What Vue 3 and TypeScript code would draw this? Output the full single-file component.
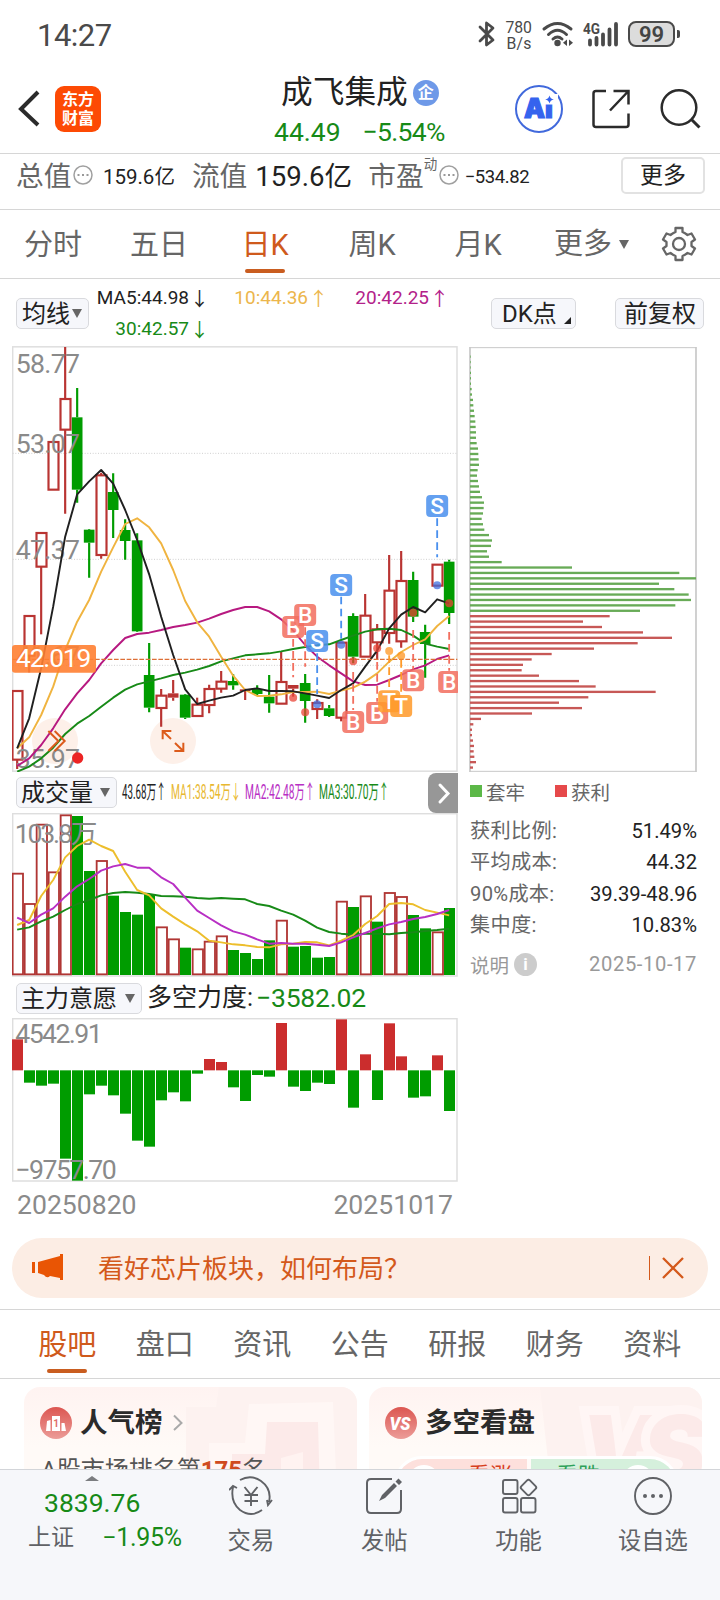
<script setup lang="ts">
type Dir = 'up' | 'down'
type Candle = { high: number; top: number; bottom: number; low: number; dir: Dir; solid?: boolean }
type Marker = { kind: 'B' | 'S' | 'T'; i: number; y: number; from: number; to: number; dot: number }

const STEP = 36
const cx = (i: number): number => 51.5 + STEP * i
const line = (ys: number[]): string => ys.map((y, i) => `${cx(i)},${y}`).join(' ')

const c = (dir: Dir, high: number, top: number, bottom: number, low: number, solid = false): Candle => ({ dir, high, top, bottom, low, solid })

const candles: Candle[] = [
  c('up', 1052, 1052, 1260, 1287), c('up', 827, 827, 948, 997), c('up', 578, 578, 681, 883),
  c('up', 305, 305, 450, 450), c('up', 21, 176, 270, 521), c('down', 144, 232, 449, 488),
  c('down', 567, 569, 608, 713), c('up', 398, 405, 646, 656), c('down', 400, 456, 510, 594),
  c('down', 538, 570, 603, 659), c('down', 580, 601, 874, 876), c('down', 909, 1005, 1103, 1117),
  c('up', 1047, 1066, 1105, 1160), c('up', 1020, 1060, 1073, 1082, true), c('down', 1062, 1064, 1133, 1137),
  c('up', 1073, 1093, 1129, 1129), c('up', 1034, 1046, 1096, 1120), c('up', 993, 1024, 1047, 1058),
  c('down', 1003, 1023, 1036, 1049), c('up', 1046, 1048, 1053, 1080, true), c('down', 1036, 1047, 1062, 1065),
  c('down', 1005, 1070, 1090, 1118), c('up', 935, 1025, 1092, 1092), c('up', 1035, 1035, 1046, 1070, true),
  c('down', 1002, 1029, 1083, 1148), c('up', 1078, 1088, 1108, 1137), c('down', 1095, 1105, 1128, 1131),
  c('up', 907, 907, 1134, 1144), c('down', 820, 828, 950, 970), c('up', 762, 826, 951, 951),
  c('up', 852, 867, 908, 960), c('up', 645, 751, 880, 911), c('up', 633, 722, 905, 923),
  c('down', 695, 720, 830, 846), c('down', 854, 876, 912, 1013), c('up', 673, 673, 738, 738),
  c('down', 659, 665, 819, 852),
]

const ma5 = [1225, 1135, 985, 800, 590, 463, 424, 390, 431, 510, 600, 703, 830, 945, 1048, 1092, 1082, 1073, 1067, 1050, 1045, 1053, 1053, 1054, 1060, 1067, 1074, 1050, 1030, 980, 932, 865, 824, 801, 817, 778, 790]
const ma10 = [1225, 1192, 1125, 1040, 930, 845, 780, 695, 622, 552, 535, 562, 610, 690, 783, 847, 890, 950, 1007, 1050, 1068, 1067, 1063, 1056, 1056, 1055, 1062, 1052, 1043, 1025, 1000, 965, 936, 915, 898, 858, 828]
const ma20 = [1278, 1255, 1215, 1165, 1108, 1060, 1020, 970, 930, 894, 882, 878, 870, 861, 855, 848, 836, 822, 810, 801, 801, 814, 838, 872, 915, 950, 976, 1000, 1024, 1035, 1034, 1020, 1005, 988, 976, 957, 946]
const ma30 = [1295, 1280, 1255, 1223, 1182, 1151, 1128, 1100, 1073, 1049, 1033, 1024, 1015, 1005, 998, 989, 978, 964, 955, 946, 943, 940, 934, 927, 921, 916, 913, 900, 887, 875, 868, 866, 870, 887, 911, 920, 927]

const markers: Marker[] = [
  { kind: 'B', i: 23, y: 861, from: 897, to: 1012, dot: 1073 },
  { kind: 'B', i: 24, y: 825, from: 862, to: 980, dot: 1117 },
  { kind: 'S', i: 25, y: 903, from: 940, to: 1062, dot: 1093 },
  { kind: 'S', i: 27, y: 735, from: 770, to: 896, dot: 914 },
  { kind: 'B', i: 28, y: 1146, from: 996, to: 1110, dot: 964 },
  { kind: 'B', i: 30, y: 1119, from: 966, to: 1085, dot: 925 },
  { kind: 'T', i: 31, y: 1084, from: 946, to: 1050, dot: 933 },
  { kind: 'T', i: 32, y: 1098, from: 960, to: 1064, dot: 947 },
  { kind: 'B', i: 33, y: 1021, from: 870, to: 987, dot: 818 },
  { kind: 'S', i: 35, y: 498, from: 535, to: 652, dot: 736 },
  { kind: 'B', i: 36, y: 1026, from: 876, to: 992, dot: 790 },
]
const markFill = { B: '#f26f5f', S: '#4a90ee', T: '#ff9a2a' }
const markDot = { B: '#ea4335', S: '#3f6fe0', T: '#ff9520' }

const profile = [2, 2, 2, 3, 3, 3, 5, 6, 9, 10, 12, 14, 16, 17, 18, 18, 20, 24, 25, 26, 27, 23, 21, 24, 27, 30, 36, 42, 41, 39, 35, 39, 43, 57, 66, 63, 51, 57, 95, 306, 628, 678, 567, 613, 656, 663, 616, 510, 419, 339, 396, 519, 606, 503, 372, 245, 185, 159, 155, 207, 327, 377, 557, 355, 267, 336, 186, 33, 10, 6, 6, 9, 12, 11, 13, 18, 9]
const FIRST_PROFIT = 48

const volume = [309, 400, 162, 305, 134, -138, -303, 271, -377, -426, -434, -373, 470, 506, -533, 536, 513, 497, -540, -549, -567, -511, 450, -530, -528, -563, -561, 393, -411, 377, -455, 367, 379, -435, -475, 485, -414]
const vol1 = [465, 450, 378, 330, 262, 228, 209, 228, 243, 305, 360, 376, 415, 440, 463, 484, 512, 517, 523, 526, 531, 532, 523, 521, 516, 517, 526, 512, 495, 462, 438, 402, 399, 403, 420, 428, 436]
const vol2 = [443, 459, 434, 415, 380, 349, 327, 302, 289, 282, 293, 293, 322, 342, 383, 422, 444, 466, 484, 494, 508, 521, 519, 521, 521, 524, 528, 517, 502, 489, 475, 463, 456, 447, 441, 432, 420]
const vol3 = [479, 472, 454, 440, 420, 402, 390, 376, 369, 366, 368, 372, 378, 379, 380, 384, 386, 384, 386, 388, 402, 408, 422, 434, 452, 473, 486, 491, 494, 491, 491, 493, 489, 487, 483, 480, 476]

const BASE = 901
const force = [808, 938, 947, 941, 1166, 1232, 973, 947, 976, 1031, 1112, 1130, 991, 967, 994, 911, 867, 876, 952, 993, 915, 920, 759, 950, 963, 938, 942, 748, 1013, 853, 990, 760, 859, 983, 979, 856, 1023]

const stats = [
  { label: '获利比例:', value: '51.49%' },
  { label: '平均成本:', value: '44.32' },
  { label: '90%成本:', value: '39.39-48.96' },
  { label: '集中度:', value: '10.83%' },
]
const infoTabs = ['股吧', '盘口', '资讯', '公告', '研报', '财务', '资料']
</script>

<template>
  <div class="page">
    <header class="status">
      <span class="clock">14:27</span>
      <svg class="st-icons" width="200" height="34" viewBox="474 18 200 34">
        <path d="M480 27 L493 40 L486.5 45 V23 L493 28 L480 41" fill="none" stroke="#4a4a4a" stroke-width="2.8" stroke-linejoin="round" stroke-linecap="round" />
        <text x="505.500" y="33" font-size="15.800" fill="#4a4a4a" textLength="26.500">780</text>
        <text x="506.500" y="48.500" font-size="15.800" fill="#4a4a4a" textLength="25">B/s</text>
        <g fill="none" stroke="#4a4a4a" stroke-width="3" stroke-linecap="round">
          <path d="M544 29 Q557.500 18 571 29" /><path d="M548.500 34.500 Q557.500 26 566.500 34.500" /><path d="M553 39 Q557.500 35 562 39" />
        </g>
        <circle cx="557.500" cy="43" r="3.200" fill="#4a4a4a" />
        <path d="M567 39.500 V46 L563 42.700Z M569 39.500 V46 L573 42.700Z" fill="#4a4a4a" />
        <text x="583" y="34" font-size="15.500" font-weight="700" fill="#4a4a4a" textLength="17" lengthAdjust="spacingAndGlyphs">4G</text>
        <path d="M590 40.500 V44.500 M596.500 38 V44.500 M603 34.500 V44.500 M609.500 29.500 V44.500 M616 24 V44.500" stroke="#4a4a4a" stroke-width="3.800" stroke-linecap="round" />
        <rect x="629" y="22" width="45" height="24" rx="7" fill="#dcdcdc" stroke="#4a4a4a" stroke-width="2" />
        <text x="651.500" y="42" font-size="22" font-weight="600" fill="#444" text-anchor="middle" textLength="25">99</text>
      </svg>
      <i class="batt-tip"></i>
    </header>

    <section class="header">
      <svg class="back" width="22" height="38" viewBox="0 0 22 38"><path d="M20 2 L3 19 L20 35" fill="none" stroke="#2b2b2b" stroke-width="4" /></svg>
      <div class="logo"><span>东方</span><span>财富</span></div>
      <div class="title">
        <div class="name">成飞集成<b class="ent">企</b></div>
        <div class="quote"><span>44.49</span><span class="pct">−5.54%</span></div>
      </div>
      <svg class="tools" width="190" height="50" viewBox="514 84 190 50">
        <circle cx="539" cy="109" r="23" fill="#fff" stroke="#4169dc" stroke-width="2" />
        <text x="524" y="118" class="ai" font-size="26.500" fill="#3563ee" stroke="#3563ee" stroke-width="1.200">Ai</text>
        <rect x="544" y="94" width="14" height="10.500" fill="#fff" />
        <path d="M549.500 95.500 Q550.300 99 553.800 99.500 Q550.300 100 549.500 103.500 Q548.700 100 545.200 99.500 Q548.700 99 549.500 95.500Z" fill="#3563ee" />
        <g fill="none" stroke="#2b2b2b" stroke-width="2.500">
          <path d="M606 91 H596 Q593.500 91 593.500 93.500 V124.500 Q593.500 127 596 127 H626 Q628.500 127 628.500 124.500 V113.500" />
          <path d="M613.500 91 H628.500 V104.500 M628 91.500 L610 110.500" />
          <circle cx="679" cy="107.500" r="17.300" /><path d="M691 119 L699.500 127.500" stroke-width="3" />
        </g>
      </svg>
    </section>

    <section class="metrics">
      <span class="key">总值</span>
      <svg class="dots" width="20" height="20" viewBox="0 0 20 20"><circle cx="10" cy="10" r="9" fill="none" stroke="#a0a0a0" stroke-width="1.500" /><path d="M4.500 10h2M9 10h2M13.500 10h2" stroke="#999" stroke-width="2" /></svg>
      <span class="v1">159.6亿</span>
      <span class="key k2">流值</span>
      <span class="v2">159.6亿</span>
      <span class="key k3">市盈</span><sup>动</sup>
      <svg class="dots" width="20" height="20" viewBox="0 0 20 20"><circle cx="10" cy="10" r="9" fill="none" stroke="#a0a0a0" stroke-width="1.500" /><path d="M4.500 10h2M9 10h2M13.500 10h2" stroke="#999" stroke-width="2" /></svg>
      <span class="v3">−534.82</span>
      <button class="more">更多</button>
    </section>

    <nav class="periods">
      <span>分时</span><span>五日</span><span class="on">日K</span><span>周K</span><span>月K</span><span class="drop">更多<i class="tri"></i></span>
      <svg class="gear" width="36" height="36" viewBox="0 0 36 36" fill="none" stroke="#666" stroke-width="2.300">
        <path d="M14.500 2 H21.500 V6 Q24 7 26.500 9 L30.500 7.500 L34 13.500 L30.500 16 V20 L34 22.500 L30.500 28.500 L26.500 27 Q24 29 21.500 30 V34 H14.500 V30 Q12 29 9.500 27 L5.500 28.500 L2 22.500 L5.500 20 V16 L2 13.500 L5.500 7.500 L9.500 9 Q12 7 14.500 6Z" stroke-linejoin="round" />
        <circle cx="18" cy="18" r="6" />
      </svg>
    </nav>

    <section class="indicators">
      <button class="chip ma">均线<i class="tri"></i></button>
      <div class="averages">
        <span>MA5:44.98<em>↓</em></span><span class="c10">10:44.36<em>↑</em></span><span class="c20">20:42.25<em>↑</em></span>
        <span class="c30">30:42.57<em>↓</em></span>
      </div>
      <button class="chip dk">DK点<i class="corner"></i></button>
      <button class="chip adj">前复权</button>
    </section>

    <main class="board">
      <div class="left">
        <svg class="kline" width="446" height="426" viewBox="36 18 1338 1278">
          <rect x="38" y="20.500" width="1333" height="1273" fill="none" stroke="#dedede" stroke-width="4.500" />
          <g stroke="#cfcfcf" stroke-width="3" stroke-dasharray="3 5"><path d="M38 340H1372M38 658H1372M38 976H1372" /></g>
          <circle cx="165" cy="1203" r="69" fill="#fdf0e9" /><circle cx="519" cy="1203" r="69" fill="#fdf0e9" />
          <g v-for="(k, i) in candles" :key="i" :stroke="k.dir === 'up' ? '#b93432' : '#009c00'">
            <path :d="`M${cx(i)} ${k.high}V${k.top}M${cx(i)} ${k.bottom}V${k.low}`" stroke-width="6.500" />
            <rect v-if="k.dir === 'up' && !k.solid" :x="cx(i) - 14" :y="k.top + 1" width="30" :height="Math.max(k.bottom - k.top - 2, 3)" fill="#fff" stroke-width="6.500" />
            <rect v-else :x="cx(i) - 15" :y="k.top" width="32" :height="k.bottom - k.top" stroke-width="0" :fill="k.dir === 'up' ? '#b93432' : '#009c00'" transform="translate(-1 0)" />
          </g>
          <g class="axis">
            <text x="47" y="99" textLength="193">58.77</text><text x="47" y="338" textLength="193">53.07</text>
            <text x="47" y="658" textLength="193">47.37</text><text x="47" y="974" textLength="193">41.67</text>
            <text x="47" y="1283" textLength="193">35.97</text>
          </g>
          <g fill="none" stroke-width="5.800" stroke-linejoin="round">
            <polyline :points="line(ma30)" stroke="#178a17" /><polyline :points="line(ma20)" stroke="#b71980" />
            <polyline :points="line(ma10)" stroke="#f0b440" /><polyline :points="line(ma5)" stroke="#202020" />
          </g>
          <path d="M38 958H1372" stroke="#dd6f37" stroke-width="3.500" stroke-dasharray="14 5" />
          <rect x="36" y="915" width="252" height="83" rx="9" fill="#ff7f32" opacity=".9" />
          <text class="price" x="48" y="981" textLength="226">42.019</text>
          <g fill="none" stroke="#dc5b1b" stroke-width="6">
            <path d="M145 1173L175 1203L145 1233M164 1173L194 1203L164 1233" />
            <path d="M488 1198V1173H514M489 1174L513 1197M550 1208V1233H523M549 1232L525 1209" />
          </g>
          <circle cx="233" cy="1254" r="17" fill="#ec2424" />
          <g v-for="(m, n) in markers" :key="'m' + n">
            <path :d="`M${cx(m.i)} ${m.from}V${m.to}`" :stroke="markFill[m.kind]" stroke-width="5.500" stroke-dasharray="23 13" />
            <circle :cx="cx(m.i)" :cy="m.dot" r="12" :fill="markDot[m.kind]" opacity=".75" />
          </g>
          <g v-for="(m, n) in markers" :key="'b' + n">
            <rect :x="cx(m.i) - 33" :y="m.y - 33" width="66" height="66" rx="12" :fill="markFill[m.kind]" opacity=".86" />
            <text class="badge" :x="cx(m.i)" :y="m.y + 24">{{ m.kind }}</text>
          </g>
        </svg>

        <div class="bar vol">
          <button class="chip">成交量<i class="tri"></i></button>
          <svg class="vtext" width="270" height="24" viewBox="121 0 270 24" font-size="19.500">
            <text x="122" y="19" textLength="44" lengthAdjust="spacingAndGlyphs" fill="#222">43.68万↑</text>
            <text x="171" y="19" textLength="70" lengthAdjust="spacingAndGlyphs" fill="#e8b830">MA1:38.54万↓</text>
            <text x="245" y="19" textLength="70" lengthAdjust="spacingAndGlyphs" fill="#b82fc4">MA2:42.48万↑</text>
            <text x="319" y="19" textLength="70" lengthAdjust="spacingAndGlyphs" fill="#178a17">MA3:30.70万↑</text>
          </svg>
          <div class="next"><svg width="30" height="40" viewBox="0 0 30 40"><path d="M12 12L20 20.500L12 29" fill="none" stroke="#fff" stroke-width="3" stroke-linecap="round" /></svg></div>
        </div>

        <svg class="volume" width="446" height="164" viewBox="36 129 1338 492">
          <rect x="38" y="131" width="1333" height="487" fill="none" stroke="#dedede" stroke-width="4.500" />
          <template v-for="(v, i) in volume" :key="i">
            <rect v-if="v > 0" :x="38 + STEP * i" :y="v + 2" width="31" :height="611 - v" fill="#fff" stroke="#b03634" stroke-width="5.500" />
            <rect v-else :x="36 + STEP * i" :y="-v" width="33" :height="615 + v" fill="#009c00" />
          </template>
          <text class="ax" x="44" y="219" textLength="248">103.8万</text>
          <g fill="none" stroke-width="5.800" stroke-linejoin="round">
            <polyline :points="line(vol3)" stroke="#178a17" /><polyline :points="line(vol1)" stroke="#edbe2c" /><polyline :points="line(vol2)" stroke="#b82fc4" />
          </g>
        </svg>

        <div class="bar will">
          <button class="chip">主力意愿<i class="tri"></i></button>
          <span class="wl">多空力度:</span><span class="wv">−3582.02</span>
        </div>

        <svg class="force" width="446" height="164" viewBox="36 744 1338 492">
          <rect x="38" y="746" width="1333" height="487" fill="none" stroke="#dedede" stroke-width="4.500" />
          <text class="ax" x="46" y="819" textLength="262">4542.91</text>
          <rect v-for="(f, i) in force" :key="i" :x="36 + STEP * i" :y="Math.min(f, BASE)" width="33" :height="Math.abs(f - BASE)" :fill="f < BASE ? '#cb2d2d' : '#009c00'" />
          <text class="ax" x="46" y="1228" textLength="304">−9757.70</text>
        </svg>
        <div class="dates"><span>20250820</span><span>20251017</span></div>
      </div>

      <aside class="right">
        <svg class="profile" width="228" height="426" viewBox="27 18 684 1278">
          <path d="M29 23H709M29 1294H709" stroke="#c8c8c8" stroke-width="3" /><path d="M30 21V1296M708 21V1296" stroke="#c8c8c8" stroke-width="5" />
          <rect v-for="(w, i) in profile" :key="i" x="30" :y="46.5 + 16.22 * i" :width="w" height="7" :fill="i < FIRST_PROFIT ? '#68ab57' : '#c75856'" />
        </svg>
        <div class="legend"><i class="sq g"></i><span>套牢</span><i class="sq r"></i><span>获利</span></div>
        <dl>
          <div v-for="s in stats" :key="s.label"><dt>{{ s.label }}</dt><dd>{{ s.value }}</dd></div>
        </dl>
        <div class="note"><span>说明</span><b>i</b><time>2025-10-17</time></div>
      </aside>
    </main>

    <div class="banner">
      <svg width="32" height="28" viewBox="0 0 32 28"><path d="M0 8H3V19H0Z M6 8 L28 2 V0 H31 V26 H28 V24 L18 22 Q15 25 12 21 L6 19Z" fill="#e95504" /></svg>
      <span>看好芯片板块，如何布局？</span>
      <i></i>
      <svg class="x" width="22" height="22" viewBox="0 0 22 22"><path d="M1 1L21 21M21 1L1 21" stroke="#d4591b" stroke-width="2.300" /></svg>
    </div>

    <nav class="info"><span v-for="(t, i) in infoTabs" :key="t" :class="{ on: i === 0 }">{{ t }}</span></nav>

    <section class="cards">
      <article>
        <svg class="wm" width="333" height="110" viewBox="24 1387 333 110">
          <path d="M219 1387H357V1497H186V1407H216Z" fill="#fdf2f0" /><path d="M249 1404L333 1402L337 1497H209V1443H245Z" fill="#fff7f5" /><path d="M267 1422L318 1422L320 1497H232V1454H265Z" fill="#fceae9" /><path d="M281 1458L303 1452V1497H281Z" fill="#fff3f1" />
        </svg>
        <h3>
          <svg width="32" height="32" viewBox="0 0 32 32"><defs><linearGradient id="rg" x2="0" y2="1"><stop stop-color="#dc5651" /><stop offset="1" stop-color="#ec9c98" /></linearGradient></defs><circle cx="16" cy="16" r="16" fill="url(#rg)" /><path d="M7 14L10.500 13V24H6Z M12 9H20V24H12Z M21.500 16H24.500L26 24H21.500Z" fill="#fff" /><text x="16" y="20" font-size="10" font-weight="700" fill="#df6f6b" text-anchor="middle">1</text></svg>
          人气榜
          <svg class="chev" width="10" height="18" viewBox="0 0 10 18"><path d="M1 1.500L8.500 9L1 16" fill="none" stroke="#aaa" stroke-width="2" /></svg>
        </h3>
        <p>A股市场排名第<b>175</b>名</p>
      </article>
      <article class="vs">
        <svg class="wm" width="333" height="110" viewBox="369 1387 333 110">
          <path d="M540 1387H702V1497H552Z" fill="#fdf2f0" />
          <g font-size="96" font-weight="900" font-style="italic" font-family="Inter, sans-serif"><text x="580" y="1485" fill="#fceae9" stroke="#fff6f5" stroke-width="18" paint-order="stroke" textLength="126">VS</text></g>
        </svg>
        <h3>
          <svg width="32" height="32" viewBox="0 0 32 32"><circle cx="16" cy="16" r="16" fill="url(#rg)" /><text x="15" y="22.500" font-size="19" font-weight="900" font-style="italic" fill="#fff" text-anchor="middle" textLength="21" lengthAdjust="spacingAndGlyphs">VS</text></svg>
          多空看盘
        </h3>
        <div class="vote"><div class="rise"><u></u>看涨</div><div class="fall">看跌<u></u></div></div>
      </article>
    </section>

    <footer>
      <div class="index">
        <i></i><strong>3839.76</strong>
        <div><span>上证</span><em>−1.95%</em></div>
      </div>
      <div class="act trade">
        <svg width="44" height="40" viewBox="0 0 44 40" fill="none" stroke="#606266" stroke-width="1.900"><path d="M11 4Q22 -2 32 5Q43 13 40 26M43 24L39 29L38 24M33 34Q22 42 11 34Q1 26 4 11M0 14L4 10L8 12" /><path d="M15.500 11L22 19L28.500 11M22 19V30M15.500 19H29M15.500 25H29" /></svg>
        <span>交易</span>
      </div>
      <div class="act">
        <svg width="40" height="40" viewBox="0 0 40 40" fill="none" stroke="#606266"><path d="M28 3H7Q3 3 3 7V33Q3 37 7 37H33Q37 37 37 33V14" stroke-width="2" /><path d="M15 25L18 19L30 7L33 10L21 22Z M31.500 5.500L34.500 2.500L38 6L35 9Z" fill="#606266" stroke="none" /></svg>
        <span>发帖</span>
      </div>
      <div class="act">
        <svg width="40" height="40" viewBox="0 0 40 40" fill="none" stroke="#606266" stroke-width="1.900"><rect x="4" y="4" width="14.500" height="14" rx="2" /><rect x="4" y="22" width="14.500" height="14.500" rx="2" /><rect x="22" y="22" width="14.500" height="14.500" rx="2" /><rect x="23.500" y="5.500" width="12" height="12" rx="2" transform="rotate(45 29.500 11.500)" /></svg>
        <span>功能</span>
      </div>
      <div class="act">
        <svg width="40" height="40" viewBox="0 0 40 40"><circle cx="20" cy="20" r="18" fill="none" stroke="#606266" stroke-width="1.900" /><g fill="#606266"><circle cx="12" cy="20" r="2" /><circle cx="20" cy="20" r="2" /><circle cx="28" cy="20" r="2" /></g></svg>
        <span>设自选</span>
      </div>
    </footer>
  </div>
</template>

<style>
body { margin: 0; background: #fff; }
</style>

<style scoped>
* { box-sizing: border-box; }
.page { width: 720px; height: 1600px; overflow: hidden; display: flex; flex-direction: column; font-family: Roboto, "Noto Sans CJK SC", sans-serif; color: #222; background: #fff; }
.page > * { flex: none; }
svg { display: block; flex: none; }
button { font: inherit; color: inherit; padding: 0; margin: 0; }
em { font-style: normal; }
span, em, dt, dd { white-space: nowrap; }

.status { height: 68px; display: flex; padding-top: 18px; }
.clock { width: 437px; margin-left: 37px; font-size: 31px; line-height: 36px; letter-spacing: -0.5px; color: #4a4a4a; }
.st-icons { overflow: visible; }
.batt-tip { width: 3px; height: 8px; margin: 12px 0 0 3px; border-radius: 0 2px 2px 0; background: #4a4a4a; }

.header { height: 86px; border-bottom: 1px solid #d6d6d6; display: flex; }
.back { margin: 22px 0 0 18px; }
.logo { width: 46px; height: 46px; margin: 18px 0 0 15px; border-radius: 9px; background: #fd4a04; color: #fff; display: flex; flex-direction: column; align-items: center; justify-content: center; font-weight: 700; font-size: 16px; line-height: 19px; }
.title { width: 333px; margin-left: 80px; padding-left: 92px; }
.name { margin-top: 6px; height: 38px; display: flex; align-items: center; font-size: 31.700px; line-height: 40px; padding-left: 8px; }
.ent { width: 26px; height: 26px; margin-left: 5px; border-radius: 50%; background: #6e99e8; color: #fff; font-size: 16px; font-weight: 700; line-height: 26px; text-align: center; }
.quote { margin-top: 4px; display: flex; gap: 22px; font-size: 26.500px; line-height: 32px; color: #178a17; padding-left: 1px; white-space: nowrap; }
.pct { letter-spacing: -.7px; }
.tools { margin: 16px 0 0; }
.ai { font-family: Inter, sans-serif; font-weight: 900; }

.metrics { height: 56px; border-bottom: 1px solid #d6d6d6; display: flex; padding-left: 16px; line-height: 46px; }
.key { font-size: 27.700px; color: #666; }
.dots { margin: 11px 0 0 1.500px; }
.v1 { margin-left: 10px; width: 73px; font-size: 20.500px; }
.k2 { margin-left: 16px; }
.v2 { width: 96px; margin-left: 8px; font-size: 27.600px; }
.k3 { margin-left: 17px; }
sup { font-size: 13.500px; line-height: 20px; color: #666; width: 14px; }
sup + .dots { margin-left: 1px; }
.v3 { margin-left: 6px; font-size: 18.500px; letter-spacing: -.4px; }
.more { width: 84px; height: 37px; margin: 3px 15px 0 auto; border: 2px solid #e2e2e2; border-radius: 5px; background: #fff; font-size: 23px; line-height: 30px; }

.periods { height: 69px; border-bottom: 1px solid #d6d6d6; display: flex; font-size: 29px; line-height: 70px; color: #666; }
.periods span { width: 106px; height: 68px; text-align: center; position: relative; }
.periods span:nth-child(4) { margin-left: 1px; }
.periods .on, .info .on { color: #cf5a1c; }
.periods .on::after, .info .on::after { content: ""; position: absolute; left: 50%; bottom: 5px; width: 40px; height: 4px; margin-left: -20px; border-radius: 2px; background: #c95d20; }
.periods .drop { display: flex; align-items: center; width: 130px; padding-left: 23px; }
.tri { display: inline-block; border: 5px solid transparent; border-top: 9px solid #666; border-bottom: 0; }
.drop .tri { margin: 0 0 0 7px; }
.gear { margin: 16px 0 0 0; }

.indicators { height: 67px; display: flex; padding-left: 16px; }
.chip { height: 31px; border: 1px solid #d9dade; border-radius: 5px; background: #f6f7fb; font-size: 24px; line-height: 28px; display: flex; align-items: center; padding-left: 5px; white-space: nowrap; flex: none; }
.indicators .chip { margin-top: 19px; }
.ma { width: 73px; }
.ma .tri { margin-left: 2px; }
.averages { width: 360px; margin-left: 8px; display: grid; grid-template-columns: 111px 119px 121px; grid-template-rows: 31px 32px; font-size: 19px; line-height: 36px; padding-top: 1px; }
.averages span { text-align: right; display: flex; justify-content: flex-end; }
.averages em { width: 18px; margin-left: 1px; font-size: 19px; font-family: "Noto Sans CJK SC", sans-serif; }
.c10 { color: #ecb64c; } .c20 { color: #b3228a; } .c30 { color: #178a17; }
.dk { width: 85px; margin-left: 34px; padding-left: 10px; position: relative; }
.corner { position: absolute; right: 4px; bottom: 4px; border-left: 7px solid transparent; border-bottom: 7px solid #222; }
.adj { width: 89px; margin-left: 39px; padding-left: 8px; }

.board { height: 893px; display: flex; padding-left: 12px; }
.left { width: 446px; }
.axis text, .ax { font-size: 80px; fill: #8a8a8a; }
.price { font-size: 79px; fill: #fff; }
.badge { font-size: 68px; fill: #fff; text-anchor: middle; font-weight: 500; }
.bar { display: flex; }
.vol { height: 41px; padding: 5px 0 0 4px; }
.vol .chip { width: 101px; padding-left: 4px; justify-content: space-between; padding-right: 6px; }
.vtext { margin: 3px 0 0 4px; }
.next { margin: -4px 0 0 auto; width: 30px; height: 40px; border-radius: 8px 0 0 8px; background: #979797; }
.will { height: 41px; padding: 6px 0 0 4px; line-height: 30px; }
.will .chip { width: 126px; padding-left: 4px; justify-content: space-between; padding-right: 6px; }
.wl { margin-left: 5px; font-size: 25px; width: 109px; }
.wv { font-size: 26.500px; letter-spacing: -.2px; color: #178a17; }
.dates { display: flex; justify-content: space-between; padding: 2px 5px 0 5px; font-size: 26.600px; line-height: 42px; color: #8a8a8a; }

.right { width: 228px; margin-left: 11px; }
.legend { height: 38px; display: flex; align-items: center; font-size: 19.500px; color: #666; padding-left: 1px; }
.sq { width: 12px; height: 12px; margin-right: 4px; }
.sq.g { background: #5cb848; } .sq.r { background: #e6494b; margin-left: 30px; }
dl { margin: 6px 0 0; }
dl div { display: flex; justify-content: space-between; height: 31.300px; line-height: 31px; font-size: 20.200px; padding-left: 1px; }
dt { color: #666; letter-spacing: .3px; } dd { margin: 0; color: #222; }
.note { display: flex; align-items: center; margin-top: 7px; height: 32px; font-size: 19.500px; color: #999; padding-left: 1px; }
.note b { width: 23px; height: 23px; margin-left: 5px; border-radius: 50%; background: #ccc; color: #fff; font-size: 17px; line-height: 23px; text-align: center; }
.note time { margin-left: auto; font-size: 20.200px; letter-spacing: .6px; }

.banner { width: 696px; height: 60px; margin: -1px 0 0 12px; border-radius: 30px; background: #fcede4; display: flex; align-items: center; padding-left: 20px; color: #d4591b; font-size: 26px; }
.banner span { width: 551px; margin: -4px 0 0 34px; }
.banner i { width: 1px; height: 24px; background: #d4591b; }
.banner .x { margin-left: 12px; }

.info { height: 70px; margin-top: 11px; border-top: 1px solid #d6d6d6; border-bottom: 1px solid #d6d6d6; display: flex; padding-left: 18.500px; font-size: 29px; line-height: 71px; color: #666; }
.info span { width: 97.500px; height: 68px; text-align: center; position: relative; }

.cards { height: 90px; overflow: hidden; display: flex; gap: 12px; padding: 8px 18px 0 24px; }
article { width: 333px; height: 130px; border-radius: 16px; background: linear-gradient(#fff3f1, #fffaf7 60px); position: relative; overflow: hidden; }
.wm { position: absolute; left: 0; top: 0; }
h3 { position: relative; margin: 20px 0 0 16px; height: 32px; display: flex; align-items: center; gap: 8px; font-size: 27.500px; line-height: 32px; font-weight: 700; color: #2b2b2b; }
.chev { margin-left: 2px; }
p { position: relative; margin: 13px 0 0 17px; font-size: 24px; line-height: 36px; color: #555; white-space: nowrap; }
p b { color: #cf4a20; }
.vote { position: relative; margin: 17px 0 0 25px; width: 284px; height: 56px; border: 3px solid #fff; border-radius: 30px; display: flex; gap: 4px; overflow: hidden; font-size: 22px; line-height: 34px; background: #fffaf8; }
.vote div { flex: 1; display: flex; }
.rise { background: #fde0dc; color: #d6401f; padding-left: 11px; gap: 28px; }
.fall { background: #d5f0dc; color: #2ea05a; padding-left: 25px; gap: 22px; }
.vote u { width: 32px; height: 32px; margin-top: 6px; border-radius: 50%; background: #fff; }

footer { height: 132px; border-top: 1px solid #d3d5d9; background: #f6f7fa; display: flex; color: #606266; }
.index { width: 183px; }
.index i { display: block; width: 0; margin: 6px 0 0 85px; border: 7px solid transparent; border-bottom: 5px solid #7b7d80; border-top: 0; }
.index strong { display: block; margin: 7px 0 0 44px; font-size: 26.500px; line-height: 30px; font-weight: 400; color: #178a17; }
.index div { display: flex; justify-content: space-between; padding: 0 1px 0 28px; line-height: 39px; font-size: 23px; }
.index em { font-size: 25px; color: #178a17; letter-spacing: -.3px; }
.act { width: 134.500px; display: flex; flex-direction: column; align-items: center; }
.trade { padding-left: 2px; }
.act svg { margin-top: 6px; }
.act span { margin-top: 8px; font-size: 23.300px; line-height: 34px; }
</style>
